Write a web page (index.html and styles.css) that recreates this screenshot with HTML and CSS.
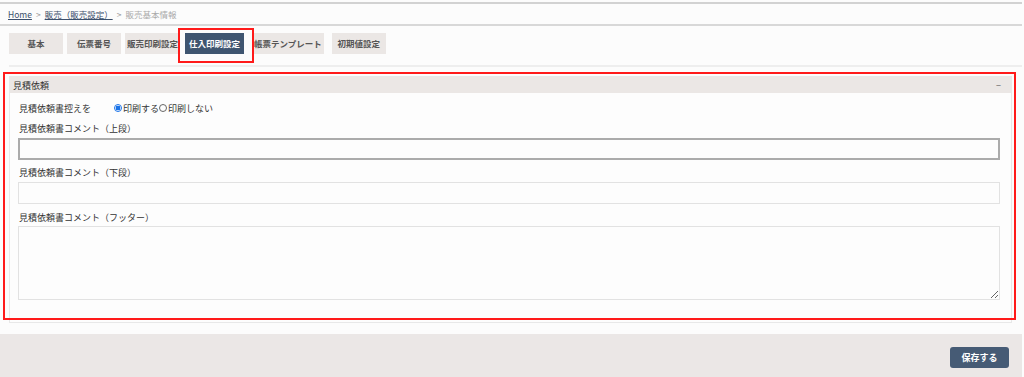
FILE: index.html
```html
<!DOCTYPE html>
<html lang="ja">
<head>
<meta charset="utf-8">
<link rel="stylesheet" href="styles.css">
</head>
<body>
<div class="page">
  <div class="topline"></div>
  <nav class="breadcrumb">
    <a class="crumb-link" href="#">Home</a><span class="sep">&gt;</span><a class="crumb-link" href="#">販売（販売設定）</a><span class="sep">&gt;</span><span class="crumb-current">販売基本情報</span>
  </nav>
  <div class="tabs">
    <div class="tab">基本</div>
    <div class="tab">伝票番号</div>
    <div class="tab">販売印刷設定</div>
    <div class="tab tab-active">仕入印刷設定</div>
    <div class="tab tab-wide">帳票テンプレート</div>
    <div class="tab tab-last">初期値設定</div>
  </div>
  <section class="panel">
    <div class="panel-head">
      <span class="panel-title">見積依頼</span>
      <span class="panel-toggle">−</span>
    </div>
    <div class="panel-body">
      <div class="radio-row">
        <span class="row-label">見積依頼書控えを</span>
        <span class="radio radio-on"></span><span class="radio-text">印刷する</span>
        <span class="radio"></span><span class="radio-text">印刷しない</span>
      </div>
      <div class="field-label first">見積依頼書コメント（上段）</div>
      <input class="text-input focused" type="text">
      <div class="field-label">見積依頼書コメント（下段）</div>
      <input class="text-input" type="text">
      <div class="field-label last">見積依頼書コメント（フッター）</div>
      <textarea class="text-area"></textarea>
    </div>
  </section>
  <footer class="footer">
    <button class="save-btn">保存する</button>
  </footer>
</div>
</body>
</html>
```

FILE: styles.css
```css
* { box-sizing: border-box; }
html, body {
  margin: 0;
  padding: 0;
  background: #fcfcfc;
}
body {
  font-family: "Noto Sans CJK JP", "Noto Sans", sans-serif;
  font-size: 9px;
  color: #333;
  overflow: hidden;
}
.page {
  width: 1022px;
}
.topline {
  margin-top: 2px;
  border-top: 2px solid #d2d2d2;
}
.breadcrumb {
  height: 22px;
  line-height: 20px;
  padding-left: 8px;
  border-bottom: 2px solid #d8d8d8;
  color: #999;
  font-size: 8.5px;
}
.crumb-link {
  color: #3b4f6b;
  text-decoration: underline;
}
.sep {
  margin: 0 4px;
  color: #999;
}
.crumb-current { color: #aaa; }

.tabs {
  display: flex;
  gap: 4px;
  margin-left: 9px;
  padding-top: 7px;
  padding-bottom: 11px;
  border-bottom: 2px solid #eeeeee;
}
.tab {
  height: 21px;
  min-width: 54px;
  padding: 0 2px;
  background: #ebe7e5;
  color: #555;
  font-weight: bold;
  font-size: 8.5px;
  line-height: 21px;
  text-align: center;
  white-space: nowrap;
}
.tab-active {
  position: relative;
  background: #3f5570;
  color: #fff;
  padding: 0 4px;
  margin-left: 1px;
  margin-right: 4px;
}
.tab-active::after {
  content: "";
  position: absolute;
  left: -7px;
  right: -10px;
  top: -5px;
  bottom: -9px;
  border: 2px solid #ff1a1a;
}
.tab-wide { padding: 0 2px; }
.tab-last { margin-left: 4px; padding: 0 3px; }

.panel {
  position: relative;
  margin: 9px 0 0 9px;
  width: 1003px;
  border: 1px solid #e8e8e8;
  background: #fdfdfd;
}
.panel::after {
  content: "";
  position: absolute;
  left: -7px;
  right: -5px;
  top: -5px;
  bottom: 2px;
  border: 2px solid #ff1a1a;
  pointer-events: none;
}
.panel-head {
  display: flex;
  justify-content: space-between;
  align-items: center;
  height: 16px;
  padding: 0 10px 0 3px;
  background: #ebe7e5;
  color: #333;
  font-size: 9px;
}
.panel-toggle { color: #666; }
.panel-body {
  padding: 9px 11px 22px 8px;
}
.radio-row {
  display: flex;
  align-items: center;
  height: 12px;
  padding-left: 1px;
}
.row-label {
  width: 95px;
}
.radio {
  width: 8px;
  height: 8px;
  border: 1px solid #666;
  border-radius: 50%;
  margin-right: 1px;
}
.radio-on {
  border-color: #1a73e8;
  background: radial-gradient(circle, #1a73e8 0 2.3px, #fff 2.6px);
}
.field-label {
  height: 12px;
  line-height: 12px;
  margin-top: 7px;
  margin-bottom: 3px;
  padding-left: 1px;
}
.field-label.first { margin-top: 9px; }
.field-label.last { margin-top: 8px; margin-bottom: 2px; }
.text-input {
  display: block;
  width: 982px;
  height: 22px;
  border: 1px solid #e2e2e2;
  background: #fdfdfd;
  outline: none;
  padding: 0 4px;
}
.text-input.focused {
  border: 2px solid #ababab;
}
.text-area {
  display: block;
  width: 982px;
  height: 74px;
  border: 1px solid #e2e2e2;
  background: #fdfdfd;
  resize: both;
  outline: none;
}
.footer {
  margin-top: 11px;
  height: 60px;
  background: #ebe7e6;
  display: flex;
  justify-content: flex-end;
  align-items: flex-start;
  padding: 13px 13px 0 0;
}
.save-btn {
  width: 59px;
  height: 21px;
  border: none;
  border-radius: 3px;
  background: #465b75;
  color: #fff;
  font-family: "Noto Sans CJK JP", "Noto Sans", sans-serif;
  font-weight: bold;
  font-size: 9px;
  padding: 0;
}
```
